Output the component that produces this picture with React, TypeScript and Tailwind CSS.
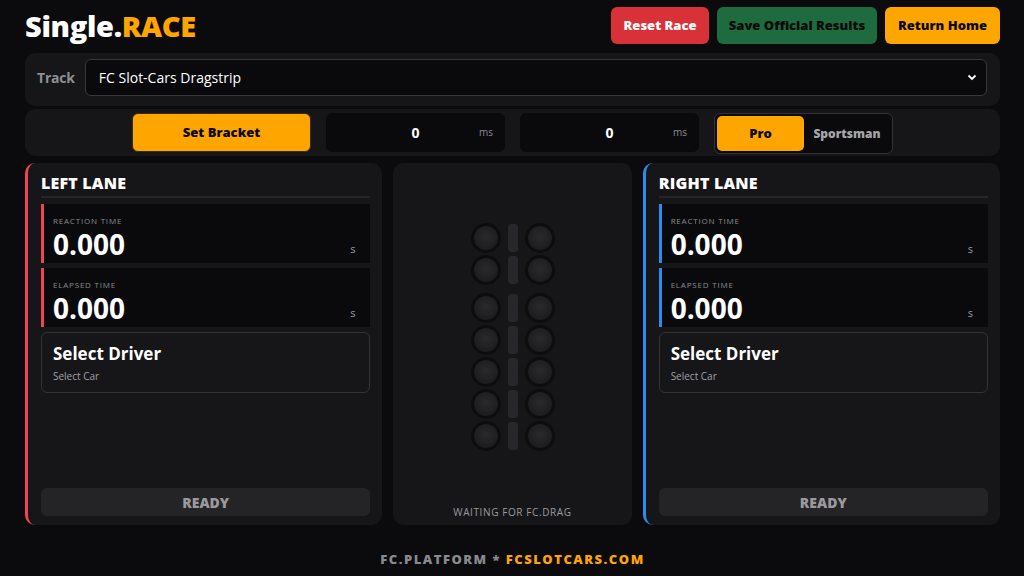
import React from "react";

function Light() {
  return (
    <div className="w-[30px] h-[30px] rounded-full border-[3px] border-[#0d0d0f] bg-[radial-gradient(circle_at_50%_45%,#2a2a2d_0%,#1d1d20_70%,#18181b_100%)]" />
  );
}

function LightRow() {
  return (
    <div className="flex items-center gap-[7px]">
      <Light />
      <div className="w-[10px] h-[28px] rounded-[3px] bg-[#26262b]" />
      <Light />
    </div>
  );
}

function TimeBox({ label, color }: { label: string; color: string }) {
  return (
    <div className={`relative h-[59px] bg-[#0a0a0c] border-l-[3px] ${color} pl-[9px] pt-[12px]`}>
      <div className="text-[8px] leading-[10px] tracking-[0.8px] text-[#8a8a8f] uppercase">{label}</div>
      <div className="mt-[3px] text-[28px] leading-[30px] font-bold text-white">0.000</div>
      <div className="absolute right-[15px] top-[38px] text-[11px] leading-[14px] text-[#9a9a9f]">s</div>
    </div>
  );
}

function Lane({ title, accent }: { title: string; accent: string }) {
  return (
    <div className={`flex flex-col bg-[#161619] rounded-[10px] border-l-[3px] ${accent} pl-[13px] pr-[12px] pt-[9px] pb-[9px]`}>
      <div className="text-[16px] leading-[22px] font-extrabold text-white tracking-[0.2px]">{title}</div>
      <div className="h-[2px] bg-[#26262a] mt-[2px] mb-[6px]" />
      <div className="flex flex-col gap-[5px]">
        <TimeBox label="Reaction Time" color={accent} />
        <TimeBox label="Elapsed Time" color={accent} />
        <div className="h-[61px] rounded-[6px] border border-[#333337] px-[11px] pt-[10px]">
          <div className="text-[17px] leading-[22px] font-bold text-white">Select Driver</div>
          <div className="text-[10px] leading-[14px] mt-[4px] text-[#a0a0a5]">Select Car</div>
        </div>
      </div>
      <div className="flex-1" />
      <div className="h-[28px] rounded-[6px] bg-[#242426] flex items-center justify-center text-[14px] font-extrabold text-[#9a9a9e]">
        READY
      </div>
    </div>
  );
}

export default function App() {
  return (
    <div className="w-[1024px] h-[576px] overflow-hidden bg-[#0b0b0d] font-['Open_Sans',sans-serif]">
      <div className="pl-[25px] pr-[24px]">
        {/* Header */}
        <div className="flex items-center justify-between pt-[7px] h-[44px]">
          <div className="text-[29px] leading-[36px] font-extrabold tracking-[-0.3px] text-white">
            Single.<span className="text-[#ffa500]">RACE</span>
          </div>
          <div className="flex gap-[8px]">
            <button className="h-[37px] w-[98px] rounded-[6px] bg-[#d83238] text-white text-[13px] font-extrabold">
              Reset Race
            </button>
            <button className="h-[37px] w-[160px] rounded-[6px] bg-[#1d6b3e] text-[#0a0a0a] text-[13px] font-extrabold">
              Save Official Results
            </button>
            <button className="h-[37px] w-[115px] rounded-[6px] bg-[#ffa500] text-[#0a0a0a] text-[13px] font-extrabold">
              Return Home
            </button>
          </div>
        </div>

        {/* Track */}
        <div className="mt-[9px] bg-[#161619] rounded-[10px] pl-[12px] pr-[13px] pt-[6px] pb-[10px] flex items-center gap-[10px]">
          <div className="text-[14px] font-bold tracking-[-0.2px] text-[#8f8f94]">Track</div>
          <div className="flex-1 h-[37px] rounded-[6px] border border-[#38383c] bg-[#0a0a0c] flex items-center justify-between pl-[13px] pr-[9px]">
            <span className="text-[14px] text-white">FC Slot-Cars Dragstrip</span>
            <svg width="10" height="7" viewBox="0 0 10 7" fill="none">
              <path d="M1.5 1.5 L5 5 L8.5 1.5" stroke="white" strokeWidth="1.8" />
            </svg>
          </div>
        </div>

        {/* Controls */}
        <div className="mt-[3px] bg-[#161619] rounded-[10px] h-[47px] flex items-center justify-center gap-[15px]">
          <button className="w-[179px] h-[39px] rounded-[6px] bg-[#ffa500] border border-[#3a2a00] text-[13px] font-extrabold text-[#0a0a0a]">
            Set Bracket
          </button>
          <div className="relative w-[179px] h-[39px] rounded-[6px] bg-[#0a0a0c] flex items-center justify-center">
            <span className="text-[14px] font-bold text-white">0</span>
            <span className="absolute right-[12px] top-[12px] text-[10px] text-[#8a8a8f]">ms</span>
          </div>
          <div className="relative w-[179px] h-[39px] rounded-[6px] bg-[#0a0a0c] flex items-center justify-center">
            <span className="text-[14px] font-bold text-white">0</span>
            <span className="absolute right-[12px] top-[12px] text-[10px] text-[#8a8a8f]">ms</span>
          </div>
          <div className="w-[179px] h-[41px] mt-[2px] rounded-[6px] border border-[#333337] bg-[#0a0a0c] p-[2px] flex">
            <div className="w-[87px] rounded-[5px] bg-[#ffa500] flex items-center justify-center text-[13px] font-extrabold text-[#0a0a0a]">
              Pro
            </div>
            <div className="flex-1 flex items-center justify-center text-[12px] font-extrabold text-[#a5a5aa]">
              Sportsman
            </div>
          </div>
        </div>

        {/* Lanes */}
        <div className="mt-[7px] h-[362px] grid grid-cols-[1.5fr_1fr_1.5fr] gap-[11px]">
          <Lane title="LEFT LANE" accent="border-[#ef4452]" />
          <div className="bg-[#161619] rounded-[10px] flex flex-col">
            <div className="flex-1 flex flex-col items-center justify-center pt-[6px]">
              <div className="flex flex-col gap-[2px]">
                <LightRow />
                <LightRow />
              </div>
              <div className="flex flex-col gap-[2px] mt-[8px]">
                <LightRow />
                <LightRow />
                <LightRow />
                <LightRow />
                <LightRow />
              </div>
            </div>
            <div className="pb-[6px] text-center text-[10px] leading-[14px] tracking-[0.6px] text-[#9a9a9f]">
              WAITING FOR FC.DRAG
            </div>
          </div>
          <Lane title="RIGHT LANE" accent="border-[#2b8cf0]" />
        </div>

        {/* Footer */}
        <div className="mt-[25px] text-center text-[13px] font-extrabold tracking-[1.5px]">
          <span className="text-[#8a8a8e]">FC.PLATFORM * </span>
          <span className="text-[#ffa500]">FCSLOTCARS.COM</span>
        </div>
      </div>
    </div>
  );
}
